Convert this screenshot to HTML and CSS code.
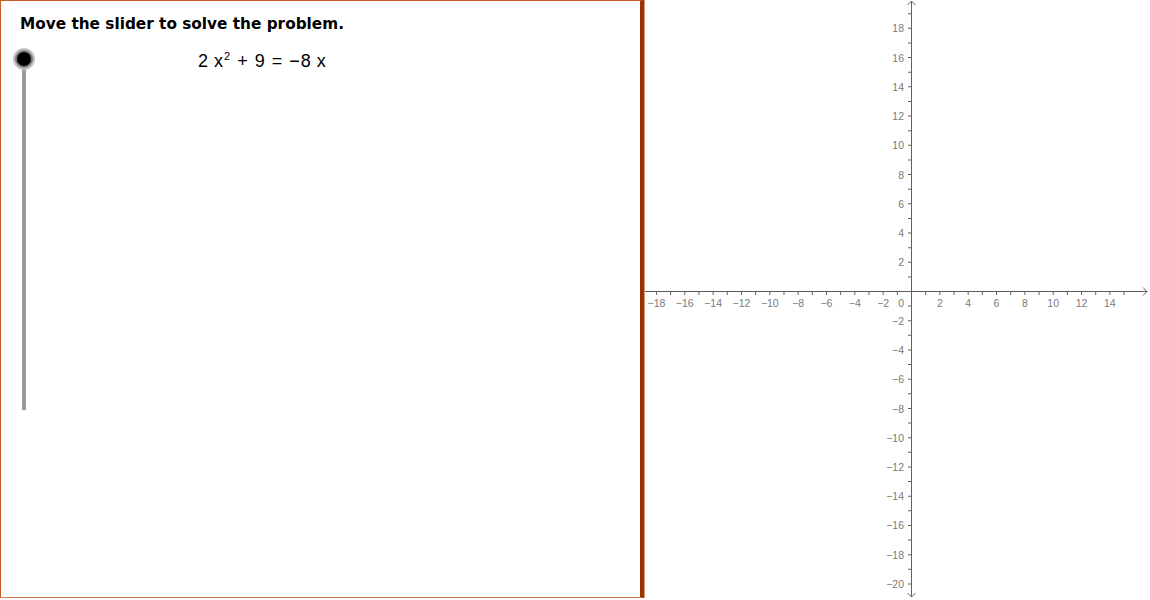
FILE: index.html
```html
<!DOCTYPE html>
<html>
<head>
<meta charset="utf-8">
<link rel="stylesheet" href="styles.css">
</head>
<body>
<div class="app">
  <div class="panel">
    <div class="slider">
      <div class="track"></div>
      <div class="knob"></div>
    </div>
    <div class="title">Move the slider to solve the problem.</div>
    <div class="eq"><span>2</span><span class="var">x</span><sup>2</sup><span class="op">+</span><span>9</span><span class="op">=</span><span class="minus">−</span><span>8</span><span class="var">x</span></div>
  </div>
  <div class="graph">
    <svg class="plot" viewBox="644 0 506 600" width="506" height="600">
      <g class="axes">
        <line x1="644" y1="291.5" x2="1147" y2="291.5"/>
        <polyline points="1143,287.5 1147,291.5 1143,295.5"/>
        <line x1="911.5" y1="1" x2="911.5" y2="597"/>
        <polyline points="907.5,5 911.5,1 915.5,5"/>
        <polyline points="907.5,593 911.5,597 915.5,593"/>
      </g>
      <g class="ticks">
        <line x1="641.77" y1="293.5" x2="1125" y2="293.5" stroke-dasharray="1 13.17"/>
        <line x1="909.5" y1="13.22" x2="909.5" y2="585" stroke-dasharray="1 13.62"/>
      </g>
      <g class="xl">
        <text x="656.44" y="307">−18</text>
        <text x="684.78" y="307">−16</text>
        <text x="713.12" y="307">−14</text>
        <text x="741.46" y="307">−12</text>
        <text x="769.8" y="307">−10</text>
        <text x="798.14" y="307">−8</text>
        <text x="826.48" y="307">−6</text>
        <text x="854.82" y="307">−4</text>
        <text x="883.16" y="307">−2</text>
        <text x="939.84" y="307">2</text>
        <text x="968.18" y="307">4</text>
        <text x="996.52" y="307">6</text>
        <text x="1024.86" y="307">8</text>
        <text x="1053.2" y="307">10</text>
        <text x="1081.54" y="307">12</text>
        <text x="1109.88" y="307">14</text>
      </g>
      <g class="yl">
        <text x="904" y="307">0</text>
        <text x="904" y="32.3">18</text>
        <text x="904" y="61.6">16</text>
        <text x="904" y="90.8">14</text>
        <text x="904" y="120.1">12</text>
        <text x="904" y="149.3">10</text>
        <text x="904" y="178.5">8</text>
        <text x="904" y="207.8">6</text>
        <text x="904" y="237">4</text>
        <text x="904" y="266.3">2</text>
        <text x="904" y="324.7">−2</text>
        <text x="904" y="354">−4</text>
        <text x="904" y="383.2">−6</text>
        <text x="904" y="412.5">−8</text>
        <text x="904" y="441.7">−10</text>
        <text x="904" y="470.9">−12</text>
        <text x="904" y="500.2">−14</text>
        <text x="904" y="529.4">−16</text>
        <text x="904" y="558.7">−18</text>
        <text x="904" y="587.9">−20</text>
      </g>
    </svg>
  </div>
</div>
</body>
</html>
```
FILE: styles.css
```css
html, body {
  margin: 0;
  padding: 0;
  background: #ffffff;
}
.app {
  display: flex;
  width: 1150px;
  height: 600px;
  overflow: hidden;
}
.panel {
  position: relative;
  box-sizing: border-box;
  flex: 0 0 644px;
  width: 644px;
  height: 598px;
  border-top: 1px solid #c85a28;
  border-left: 1px solid #c85a28;
  border-bottom: 1px solid #d07a50;
  border-right: 4px solid #993300;
  box-shadow: 1px 0 0 #d59a80;
  padding: 13px 0 0 19px;
  font-family: "DejaVu Sans", "Liberation Sans", sans-serif;
  color: #000;
}
.title {
  font-weight: bold;
  font-size: 15.3px;
  line-height: 20px;
}
.eq {
  margin: 17px 0 0 178px;
  font-family: "Liberation Sans", Arial, sans-serif;
  font-size: 18px;
  line-height: 20px;
  display: flex;
  align-items: baseline;
}
.eq .var {
  margin-left: 6px;
}
.eq .minus {
  margin-right: 1px;
}
.eq sup {
  font-size: 11px;
  position: relative;
  top: -7px;
  vertical-align: baseline;
  margin-left: 1px;
}
.eq .op {
  margin: 0 7px;
}
.slider {
  position: absolute;
  left: 21px;
  top: 57px;
  width: 4px;
  height: 353px;
}
.track {
  position: absolute;
  left: 0;
  top: 0;
  width: 4px;
  height: 352px;
  background: #9a9a9a;
}
.knob {
  position: absolute;
  left: -7px;
  top: -8px;
  width: 14px;
  height: 14px;
  border-radius: 50%;
  background: #000;
  border: 2px solid #7a7a7a;
  box-shadow: 0 0 0 2px #c4c4c4;
}
.graph {
  flex: 1 1 auto;
  height: 600px;
}
.plot {
  display: block;
}
.axes line, .axes polyline {
  stroke: #606060;
  stroke-width: 1;
  fill: none;
}
.ticks line {
  stroke: #606060;
  stroke-width: 3;
}
.xl text, .yl text {
  font-family: "Liberation Sans", Arial, sans-serif;
  font-size: 10.5px;
  fill: #7a7a7a;
}
.xl text {
  text-anchor: middle;
}
.yl text {
  text-anchor: end;
}
```
